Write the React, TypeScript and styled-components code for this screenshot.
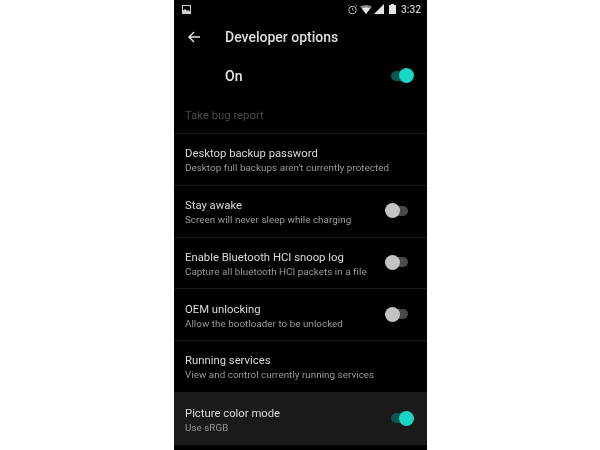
import styled, { createGlobalStyle } from 'styled-components';

const GlobalStyle = createGlobalStyle`
  html, body {
    margin: 0;
    padding: 0;
    background: #fff;
  }
`;

const Page = styled.div`
  width: 600px;
  height: 450px;
  display: flex;
  justify-content: center;
  overflow: hidden;
`;

const Phone = styled.div`
  width: 253px;
  height: 450px;
  margin-left: 1px;
  background: #000;
  display: flex;
  flex-direction: column;
  font-family: Roboto, 'Liberation Sans', sans-serif;
  overflow: hidden;
`;

const Content = styled.div`
  display: flex;
  flex-direction: column;
  filter: blur(0.3px);
`;

const StatusBar = styled.div`
  height: 18px;
  flex: none;
  display: flex;
  align-items: center;
  padding: 0 6px 0 8px;
`;

const StatusRight = styled.div`
  margin-left: auto;
  display: flex;
  align-items: center;
  gap: 2px;
`;

const Clock = styled.span`
  font-size: 10.2px;
  font-weight: 500;
  color: #c4c4c4;
  margin-left: 3px;
`;

const Toolbar = styled.div`
  height: 38px;
  flex: none;
  display: flex;
  align-items: center;
  padding-left: 14px;
  gap: 25px;
`;

const Title = styled.div`
  font-size: 14px;
  font-weight: 500;
  color: #dedede;
`;

const MasterRow = styled.div`
  height: 40px;
  flex: none;
  display: flex;
  align-items: center;
  justify-content: space-between;
  padding: 0 13px 0 51px;
`;

const MasterLabel = styled.div`
  font-size: 14px;
  font-weight: 500;
  color: #e6e6e6;
`;

const DisabledRow = styled.div`
  height: 37px;
  flex: none;
  display: flex;
  align-items: center;
  padding: 2px 11px 0;
  font-size: 11.3px;
  color: #4a4a4a;
  box-sizing: border-box;
`;

const Row = styled.div<{ $active?: boolean; $plain?: boolean }>`
  height: ${({ $active }) => ($active ? '53px' : '51.75px')};
  flex: none;
  box-sizing: border-box;
  display: flex;
  align-items: center;
  justify-content: space-between;
  padding: 0 ${({ $active }) => ($active ? '13px' : '19px')} 0 11px;
  border-top: 1px solid ${({ $plain }) => ($plain ? 'transparent' : '#1c1c1c')};
  background: ${({ $active }) => ($active ? '#1a1a1a' : 'transparent')};
`;

const RowText = styled.div`
  display: flex;
  flex-direction: column;
  margin-top: 2px;
`;

const RowTitle = styled.div`
  font-size: 11.3px;
  line-height: 15px;
  color: #dadada;
`;

const RowSub = styled.div`
  font-size: 9.8px;
  line-height: 13px;
  color: #9a9a9a;
  letter-spacing: 0.05px;
`;

const Track = styled.div<{ $on?: boolean }>`
  position: relative;
  flex: none;
  width: 22px;
  height: 10px;
  border-radius: 5px;
  margin-right: ${({ $on }) => ($on ? '1px' : '0')};
  margin-top: -1px;
  background: ${({ $on }) => ($on ? '#0f5652' : '#4a4a4a')};
`;

const Thumb = styled.div<{ $on?: boolean }>`
  position: absolute;
  top: -2.5px;
  width: 15px;
  height: 15px;
  border-radius: 50%;
  left: ${({ $on }) => ($on ? '8px' : '-1px')};
  background: ${({ $on }) => ($on ? '#17d6c6' : '#c4c4c4')};
`;

function Switch({ on }: { on?: boolean }) {
  return (
    <Track $on={on}>
      <Thumb $on={on} />
    </Track>
  );
}

const settings = [
  { title: 'Desktop backup password', sub: "Desktop full backups aren't currently protected" },
  { title: 'Stay awake', sub: 'Screen will never sleep while charging', toggle: true },
  { title: 'Enable Bluetooth HCI snoop log', sub: 'Capture all bluetooth HCI packets in a file', toggle: true },
  { title: 'OEM unlocking', sub: 'Allow the bootloader to be unlocked', toggle: true },
  { title: 'Running services', sub: 'View and control currently running services' },
];

export default function App() {
  return (
    <Page>
      <GlobalStyle />
      <Phone>
        <Content>
          <StatusBar>
            <svg width="9" height="9" viewBox="0 0 9 9">
              <rect x="0.5" y="0.5" width="8" height="8" fill="none" stroke="#cfcfcf" />
              <path d="M1 8V5.5L3 4l2 2 1-1 2 1.5V8z" fill="#cfcfcf" />
            </svg>
            <StatusRight>
              <svg width="11" height="11" viewBox="0 0 10 11" fill="none" stroke="#b4b4b4">
                <circle cx="5" cy="6" r="3.8" strokeWidth="1" />
                <path d="M5 3.8V6l1.4 1M0.6 2.2 2 .9M9.4 2.2 8 .9" strokeWidth="0.9" />
              </svg>
              <svg width="12" height="9" viewBox="0 0 12 9">
                <path d="M0 1.5Q6-1.5 12 1.5L6 9z" fill="#8a8a8a" />
                <path d="M2 3.5Q6 1.5 10 3.5L6 9z" fill="#e8e8e8" />
              </svg>
              <svg width="10" height="10" viewBox="0 0 10 10">
                <path d="M10 0V10H0z" fill="#e4e4e4" />
              </svg>
              <svg width="7" height="10" viewBox="0 0 7 10" style={{ marginLeft: 3 }}>
                <path d="M2 0h3v1h2v9H0V1h2z" fill="#e4e4e4" />
              </svg>
              <Clock>3:32</Clock>
            </StatusRight>
          </StatusBar>
          <Toolbar>
            <svg width="12" height="12" viewBox="0 0 12 12" fill="none" stroke="#e6e6e6" strokeWidth="1.4">
              <path d="M12 6H1M6 1 1 6l5 5" />
            </svg>
            <Title>Developer options</Title>
          </Toolbar>
          <MasterRow>
            <MasterLabel>On</MasterLabel>
            <Switch on />
          </MasterRow>
          <DisabledRow>Take bug report</DisabledRow>
          {settings.map((item) => (
            <Row key={item.title}>
              <RowText>
                <RowTitle>{item.title}</RowTitle>
                <RowSub>{item.sub}</RowSub>
              </RowText>
              {item.toggle && <Switch />}
            </Row>
          ))}
          <Row $active $plain>
            <RowText>
              <RowTitle>Picture color mode</RowTitle>
              <RowSub>Use sRGB</RowSub>
            </RowText>
            <Switch on />
          </Row>
        </Content>
      </Phone>
    </Page>
  );
}
